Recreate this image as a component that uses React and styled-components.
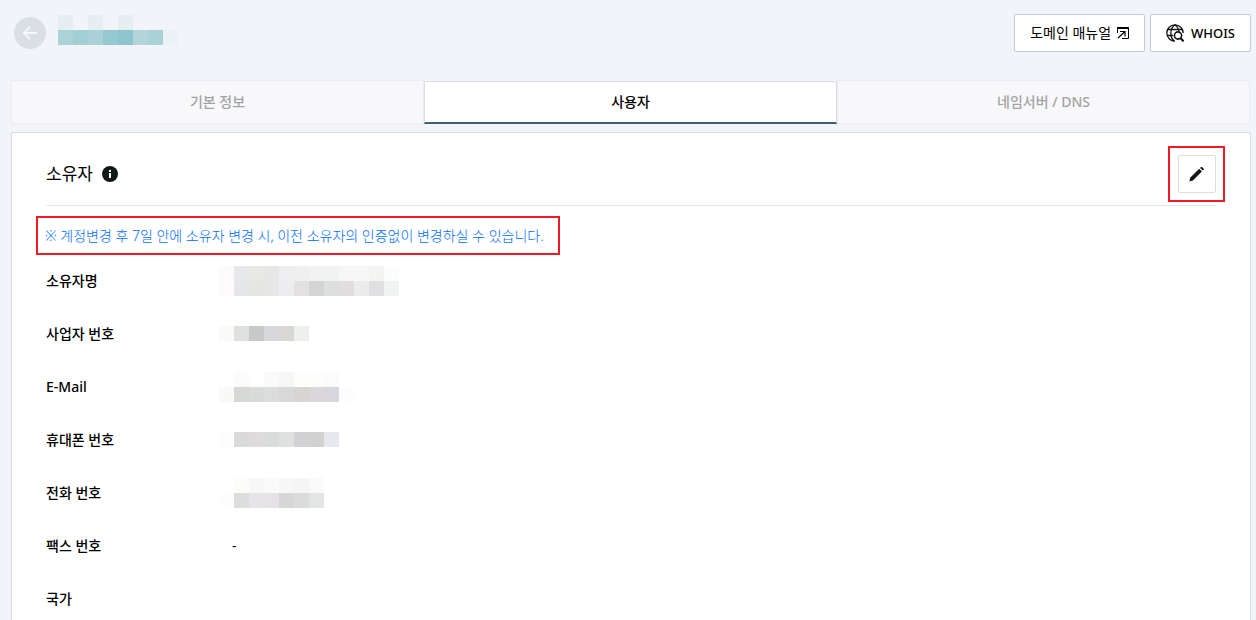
import React from "react";
import styled, { createGlobalStyle } from "styled-components";
import { useState } from "react";

const tabs = [
  { id: "basic", label: "기본 정보" },
  { id: "user", label: "사용자" },
  { id: "dns", label: "네임서버 / DNS" },
];

// masked values, one array of cell colors per line
const domainMask = [
  ["#e6eef2", "", "#e6eef2", "", "#e6eef2", "", "", ""],
  ["#abd2d6", "#a2cfd5", "#abd1d8", "#95c9d1", "#8dc4ce", "#b3d5da", "#a9d2d7", "#eaf2f6"],
];

const owner = [
  {
    label: "소유자명",
    mask: [
      ["#fcfafb", "#e7e8eb", "#e8e8e5", "#e7e7e5", "#eeeef1", "#eeefef", "#f2f2f2", "#f2f2f2", "#f6f6f6", "#f7f7f7", "#f4f4f3", "#fcfcfc"],
      ["#fcfafb", "#e6e7ea", "#e5e5e2", "#e7e7e7", "#ededf0", "#e3e0e2", "#d4d4d4", "#dcdfde", "#e1dee0", "#ececec", "#e0e0e2", "#f1f3f2"],
    ],
  },
  {
    label: "사업자 번호",
    mask: [["#fafaf9", "#dfe1e0", "#c8c8c8", "#d6d7da", "#d8d7d3", "#eeefef"]],
  },
  {
    label: "E-Mail",
    mask: [
      ["", "#fbfbfb", "", "#fafafa", "#f6f6f6", "#fdfdfb", "#fdfdfc", "#fbfbfb", ""],
      ["#f9faf8", "#d5d8d4", "#d8dbda", "#dcdcdd", "#dad9da", "#d6d5d2", "#dbd6da", "#d7d6dc", "#fdfdfd"],
    ],
  },
  {
    label: "휴대폰 번호",
    mask: [["#fdfdfd", "#dadadb", "#dddbdc", "#dadcdb", "#dfe0e0", "#d2d1d3", "#d0d1d0", "#e7e8ed"]],
  },
  {
    label: "전화 번호",
    mask: [
      ["", "#fcfcf9", "#f7f7f7", "#fafafa", "#f7f7f7", "#f5f5f5", "#fafafa"],
      ["#fdfdfd", "#dcdddd", "#e6e4e7", "#e5e3e6", "#d6d6d6", "#dbdbdb", "#e2e5e4"],
    ],
  },
  { label: "팩스 번호", value: "-" },
  { label: "국가", value: "" },
];

export default function App() {
  const [activeTab, setActiveTab] = useState("user");

  return (
    <>
      <GlobalStyle />
      <Page>
        <TopBar>
          <BackButton type="button" aria-label="뒤로">
            <ArrowIcon />
          </BackButton>
          <DomainName>
            <Masked lines={domainMask} />
          </DomainName>
          <Actions>
            <ActionButton type="button">
              도메인 매뉴얼
              <OpenIcon />
            </ActionButton>
            <ActionButton type="button" $strong>
              <GlobeIcon />
              WHOIS
            </ActionButton>
          </Actions>
        </TopBar>
        <Tabs role="tablist">
          {tabs.map((tab) => (
            <Tab
              key={tab.id}
              type="button"
              role="tab"
              aria-selected={tab.id === activeTab}
              $active={tab.id === activeTab}
              onClick={() => setActiveTab(tab.id)}
            >
              {tab.label}
            </Tab>
          ))}
        </Tabs>
        <Card>
          <CardHeader>
            <Title>소유자</Title>
            <InfoButton type="button" aria-label="소유자 안내">
              <InfoIcon />
            </InfoButton>
            <Highlight>
              <EditButton type="button" aria-label="수정">
                <PencilIcon />
              </EditButton>
            </Highlight>
          </CardHeader>
          <Notice>
            ※ 계정변경 후 7일 안에 소유자 변경 시, 이전 소유자의 인증없이 변경하실 수 있습니다.
          </Notice>
          <Details>
            {owner.map((row) => (
              <DetailRow key={row.label}>
                <Label>{row.label}</Label>
                <Value $text={!row.mask}>
                  {row.mask ? <Masked lines={row.mask} /> : row.value}
                </Value>
              </DetailRow>
            ))}
          </Details>
        </Card>
      </Page>
    </>
  );
}

const Masked = ({ lines }) => {
  return (
    <MaskBox>
      {lines.map((line, i) => (
        <MaskLine key={i}>
          {line.map((color, j) => (
            <MaskCell key={j} $color={color} />
          ))}
        </MaskLine>
      ))}
    </MaskBox>
  );
};

const ArrowIcon = () => (
  <svg width="16" height="16" viewBox="0 0 16 16" fill="none" stroke="#f6f8fa" strokeWidth="1.8">
    <path d="M15 8H2M8 1.8 1.8 8 8 14.2" />
  </svg>
);

const OpenIcon = () => (
  <svg width="12" height="12" viewBox="0 0 12 12" fill="none" stroke="#000">
    <path d="M0 1h12" strokeWidth="2" />
    <path d="M.5 1v5M11.5 1v10.5H5" />
    <path d="M1 11 8 4.5M3 4.5h5v5" strokeWidth="1.2" />
  </svg>
);

const GlobeIcon = () => (
  <svg width="18" height="18" viewBox="0 0 18 18" fill="none" stroke="#111" strokeWidth="1.3">
    <path d="M9 17.2A8.2 8.2 0 1 1 17.2 9" />
    <path d="M8.2 17C3.6 13.5 3.6 4.5 9 .8c2.3 1.7 3.5 3.7 3.9 6" />
    <path d="M1.5 5.5h15M1.5 11.5H7" />
    <circle cx="12" cy="11.5" r="3.6" strokeWidth="1.6" />
    <path d="m14.6 14.2 3 3.2" strokeWidth="2" />
  </svg>
);

const InfoIcon = () => (
  <svg width="16" height="16" viewBox="0 0 16 16">
    <circle cx="8" cy="8" r="8" fill="#101818" />
    <path d="M7 4h2v2H7zM7 7h2v5H7z" fill="#fff" />
  </svg>
);

const PencilIcon = () => (
  <svg width="16" height="16" viewBox="0 0 16 16" fill="#101818">
    <path d="m10.2 2.8 2.7 2.7-9 8.9-3.5 1 .7-3.6z" />
    <path d="m11.1 1.9.9-.8c.3-.3.7-.3 1 0l1.700 1.700c.3.3.3.7 0 1l-.9.8z" />
  </svg>
);

const GlobalStyle = createGlobalStyle`
  * {
    box-sizing: border-box;
  }
  html {
    scrollbar-width: none;
  }
  body {
    margin: 0;
    background-color: #f3f4f9;
    color: #000;
    font-family: "Noto Sans", "Noto Sans CJK KR", sans-serif;
    font-size: 14px;
    line-height: 20px;
  }
  button {
    font: inherit;
    color: inherit;
    cursor: pointer;
  }
  svg {
    display: block;
    flex-shrink: 0;
  }
`;

const Page = styled.main`
  display: flex;
  flex-direction: column;
  padding: 14px 5px 0 11px;
`;

const TopBar = styled.header`
  display: flex;
  align-items: center;
  margin-bottom: 28px;
  padding-left: 3px;
`;

const BackButton = styled.button`
  display: flex;
  align-items: center;
  justify-content: center;
  width: 32px;
  height: 32px;
  padding: 0;
  border: none;
  border-radius: 50%;
  background-color: #d9dfe2;
`;

const DomainName = styled.div`
  margin: 0 0 6px 12px;
`;

const Actions = styled.div`
  display: flex;
  gap: 5px;
  margin-left: auto;
`;

const ActionButton = styled.button`
  display: flex;
  align-items: center;
  gap: ${(props) => (props.$strong ? "7px" : "6px")};
  height: 38px;
  padding: 0 15px;
  border: 1px solid #c3cbd6;
  border-radius: 2px;
  background-color: #fff;
  font-size: ${(props) => (props.$strong ? "13px" : "14px")};
  font-weight: ${(props) => (props.$strong ? 500 : 400)};
`;

const Tabs = styled.div`
  display: grid;
  grid-template-columns: repeat(3, 1fr);
  height: 44px;
  margin: 0 1px 8px 0;
`;

const Tab = styled.button`
  margin-top: ${(props) => (props.$active ? "1px" : "0")};
  padding: 0;
  border: 1px solid ${(props) => (props.$active ? "#d8dee3" : "#ebedf0")};
  border-bottom: ${(props) => (props.$active ? "2px solid #3c6072" : "1px solid #ebedf0")};
  background-color: ${(props) => (props.$active ? "#fff" : "#f8f8fa")};
  color: ${(props) => (props.$active ? "#000" : "#a3a3a5")};
  font-weight: 500;
`;

const Card = styled.section`
  padding: 0 34px 24px;
  border: 1px solid #d8dde3;
  border-radius: 2px;
  background-color: #fff;
`;

const CardHeader = styled.div`
  display: flex;
  align-items: center;
  padding: 22px 0 12px;
  border-bottom: 1px solid #e4e7ea;
`;

const Title = styled.h2`
  margin: 0;
  font-size: 17px;
  font-weight: 400;
`;

const InfoButton = styled.button`
  margin-left: 9px;
  padding: 0;
  border: none;
  background: none;
`;

const Highlight = styled.div`
  position: relative;
  margin-left: auto;

  &::after {
    content: "";
    position: absolute;
    inset: -9px -9px -9px -10px;
    border: 2px solid #ed1c24;
    pointer-events: none;
  }
`;

const EditButton = styled.button`
  display: flex;
  align-items: center;
  justify-content: center;
  width: 38px;
  height: 38px;
  padding: 0;
  border: 1px solid #d8dee3;
  border-radius: 2px;
  background-color: #fff;
`;

const Notice = styled.p`
  width: fit-content;
  margin: 10px 0 0 -10px;
  padding: 8px 14px 7px 7px;
  border: 2px solid #ed1c24;
  color: #006eff;
  font-weight: 300;
`;

const Details = styled.dl`
  margin: -1px 0 0;
`;

const DetailRow = styled.div`
  display: grid;
  grid-template-columns: 173px 1fr;
  align-items: center;
  height: 53px;
`;

const Label = styled.dt`
  font-weight: 500;
`;

const Value = styled.dd`
  margin: 0;
  padding-left: ${(props) => (props.$text ? "13px" : "0")};
`;

const MaskBox = styled.div`
  display: flex;
  flex-direction: column;
`;

const MaskLine = styled.div`
  display: flex;
`;

const MaskCell = styled.span`
  width: 15px;
  height: 15px;
  background-color: ${(props) => props.$color || "transparent"};
`;
